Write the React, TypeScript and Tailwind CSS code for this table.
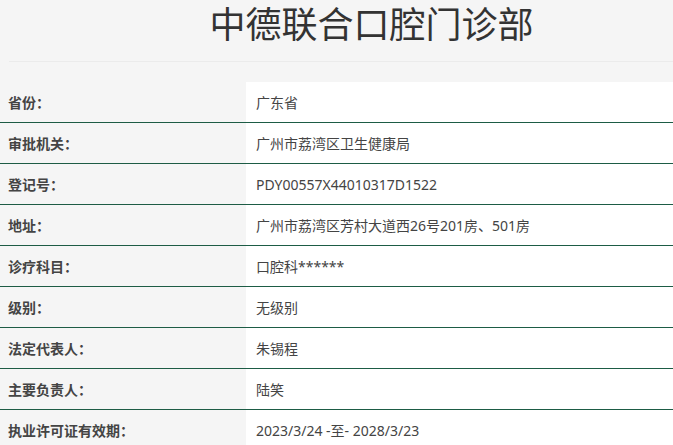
import React from "react";

const rows: [string, string][] = [
  ["省份:", "广东省"],
  ["审批机关:", "广州市荔湾区卫生健康局"],
  ["登记号:", "PDY00557X44010317D1522"],
  ["地址:", "广州市荔湾区芳村大道西26号201房、501房"],
  ["诊疗科目:", "口腔科******"],
  ["级别:", "无级别"],
  ["法定代表人:", "朱锡程"],
  ["主要负责人:", "陆笑"],
  ["执业许可证有效期:", "2023/3/24 -至- 2028/3/23"],
];

export default function App() {
  return (
    <div
      className="min-h-[445px] w-full bg-[#f5f5f5] text-[#333]"
      style={{ fontFamily: '"Noto Sans", "Noto Sans CJK SC", sans-serif' }}
    >
      <div className="h-[61px] pl-[70px] text-center text-[36px] leading-[50px] text-[#333]">
        中德联合口腔门诊部
      </div>
      <div className="ml-[9px] h-px bg-[#ebebeb]" />
      <div className="mt-[20px]">
        {rows.map(([k, v], i) => (
          <div
            key={i}
            className={`grid grid-cols-[246px_1fr] ${i < rows.length - 1 ? "border-b border-[#1d5c45]" : ""}`}
          >
            <div className="flex h-10 items-center pl-2 text-[14px] font-bold text-[#444]">
              {k.replace(":", "：")}
            </div>
            <div className="flex h-10 items-center bg-white pl-[10px] text-[14px] text-[#444]">
              {v}
            </div>
          </div>
        ))}
      </div>
    </div>
  );
}
